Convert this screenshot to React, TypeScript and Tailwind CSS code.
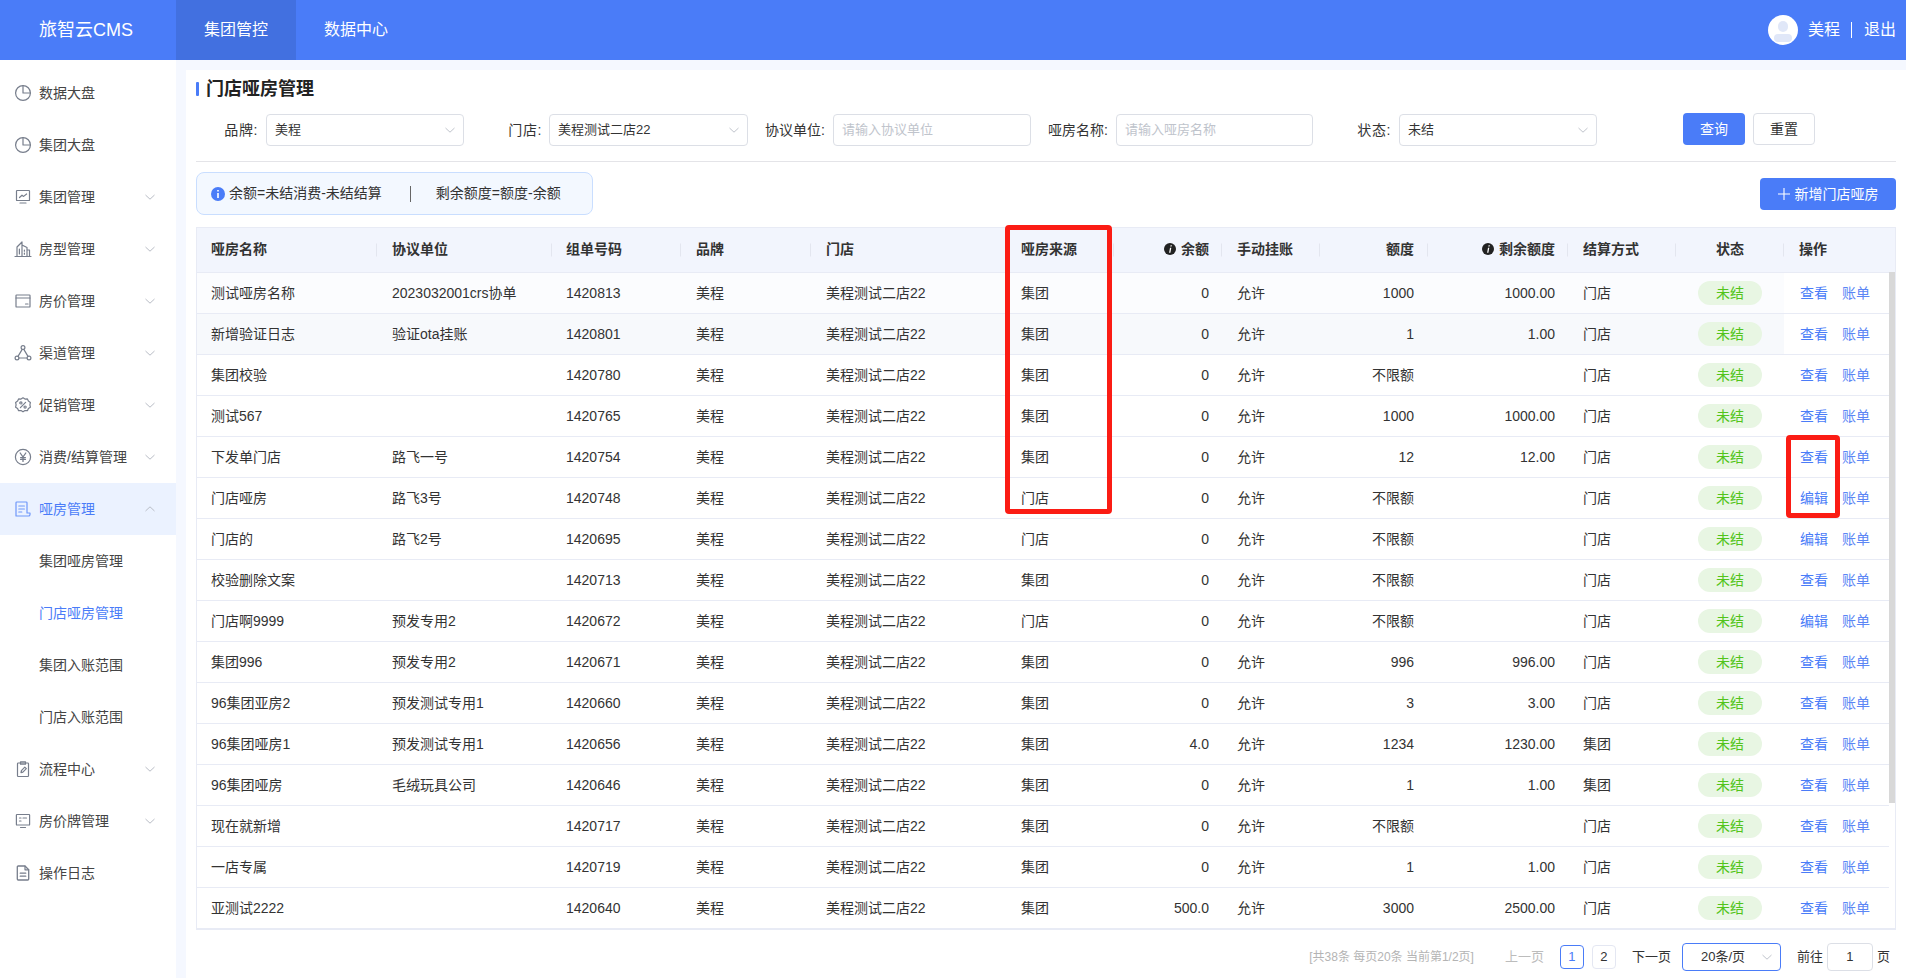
import React from "react";

const FONT = { fontFamily: '"Liberation Sans","Noto Sans CJK SC",sans-serif' };

type IP = { c?: string };
const S = ({ c = "#777e8c", children }: IP & { children: React.ReactNode }) => (
  <svg width="18" height="18" viewBox="0 0 18 18" fill="none" stroke={c} strokeWidth="1.2" strokeLinecap="round" strokeLinejoin="round" className="shrink-0">
    {children}
  </svg>
);
const Pie = (p: IP) => (
  <S {...p}>
    <circle cx="9" cy="9" r="7.4" />
    <path d="M9 1.6V9H16.4" />
  </S>
);
const MonitorChart = (p: IP) => (
  <S {...p}>
    <rect x="2.5" y="2.5" width="13" height="10" rx="0.6" />
    <path d="M5.5 9.5 8 7.2l1.6 1.2 3-2.4M6 15h6" />
  </S>
);
const Building = (p: IP) => (
  <S {...p}>
    <path d="M1 16.5h16M3 16V7l5-5v14M8 5l5 2.5V16M13 10h2.5v6M5.4 9v5M10.4 10v1.2M10.4 13v1.2" />
  </S>
);
const Card = (p: IP) => (
  <S {...p}>
    <rect x="2" y="3" width="14" height="12" rx="0.6" />
    <path d="M2 6h14M11.5 12h2.5" />
  </S>
);
const Nodes = (p: IP) => (
  <S {...p}>
    <circle cx="9" cy="3.6" r="1.9" />
    <circle cx="3" cy="14" r="1.9" />
    <circle cx="15" cy="14" r="1.9" />
    <path d="M8.2 5.4 4 12.4M9.8 5.4l4.2 7M5 14h8" />
  </S>
);
const Badge = (p: IP) => (
  <S {...p}>
    <path d="M9 1.8l2 1.3 2.4-.2 1 2.2 2 1.3-.5 2.4.5 2.4-2 1.3-1 2.2-2.4-.2-2 1.3-2-1.3-2.4.2-1-2.2-2-1.3.5-2.4L1.6 6.4l2-1.3 1-2.2 2.4.2z" />
    <circle cx="6.9" cy="6.9" r="1.1" />
    <circle cx="11.1" cy="11.1" r="1.1" />
    <path d="M11.6 6.4 6.4 11.6" />
  </S>
);
const Yen = (p: IP) => (
  <S {...p}>
    <circle cx="9" cy="9" r="7.6" strokeWidth="1.2" />
    <path d="M6.2 5 9 9l2.8-4M9 9v4.4M6.6 9.6h4.8M6.6 11.4h4.8" strokeWidth="1.3" />
  </S>
);
const Doc = (p: IP) => (
  <S {...p}>
    <path d="M13 13V2.8A.8.8 0 0 0 12.2 2H2.8a.8.8 0 0 0-.8.8V16h12.4a1.6 1.6 0 0 0 1.6-1.6V13z" />
    <path d="M4.8 6h5.6M4.8 9h5.6M4.8 12h3" />
  </S>
);
const Clip = (p: IP) => (
  <S {...p}>
    <rect x="3.5" y="3" width="11" height="13.5" rx="0.8" />
    <path d="M6.5 1.8h5v2.4h-5zM7 12.6l.4-2 3.4-3.4 1.5 1.5-3.4 3.4z" />
  </S>
);
const Board = (p: IP) => (
  <S {...p}>
    <rect x="2.4" y="2.5" width="13.2" height="10.5" rx="0.6" />
    <path d="M5.5 6h1.5M9 6h3.5M5.5 9h1.5M6.5 15.5h5" />
  </S>
);
const FileI = (p: IP) => (
  <S {...p}>
    <path d="M11 2H4.2a.9.9 0 0 0-.9.9v12.2c0 .5.4.9.9.9h9.6a.9.9 0 0 0 .9-.9V5.8z" strokeWidth="1.3" />
    <path d="M11 2v3.8h3.7M6.2 9.2h5.6M6.2 12.2h5.6" />
  </S>
);

const Chevron = ({ up = false, c = "#b9bdc6" }: { up?: boolean; c?: string }) => (
  <svg width="12" height="12" viewBox="0 0 12 12" fill="none" stroke={c} strokeWidth="1" className="shrink-0">
    <path d={up ? "M1.5 8 6 3.8 10.5 8" : "M1.5 4 6 8.2 10.5 4"} />
  </svg>
);

const menu: { t: string; I?: (p: IP) => React.ReactElement; arrow?: boolean; active?: boolean; sub?: boolean; cur?: boolean }[] = [
  { t: "数据大盘", I: Pie },
  { t: "集团大盘", I: Pie },
  { t: "集团管理", I: MonitorChart, arrow: true },
  { t: "房型管理", I: Building, arrow: true },
  { t: "房价管理", I: Card, arrow: true },
  { t: "渠道管理", I: Nodes, arrow: true },
  { t: "促销管理", I: Badge, arrow: true },
  { t: "消费/结算管理", I: Yen, arrow: true },
  { t: "哑房管理", I: Doc, arrow: true, active: true },
  { t: "集团哑房管理", sub: true },
  { t: "门店哑房管理", sub: true, cur: true },
  { t: "集团入账范围", sub: true },
  { t: "门店入账范围", sub: true },
  { t: "流程中心", I: Clip, arrow: true },
  { t: "房价牌管理", I: Board, arrow: true },
  { t: "操作日志", I: FileI },
];

type Row = [string, string, string, string, string, string, string, string, string];
const rows: Row[] = [
  ["测试哑房名称", "2023032001crs协单", "1420813", "集团", "0", "1000", "1000.00", "门店", "查看"],
  ["新增验证日志", "验证ota挂账", "1420801", "集团", "0", "1", "1.00", "门店", "查看"],
  ["集团校验", "", "1420780", "集团", "0", "不限额", "", "门店", "查看"],
  ["测试567", "", "1420765", "集团", "0", "1000", "1000.00", "门店", "查看"],
  ["下发单门店", "路飞一号", "1420754", "集团", "0", "12", "12.00", "门店", "查看"],
  ["门店哑房", "路飞3号", "1420748", "门店", "0", "不限额", "", "门店", "编辑"],
  ["门店的", "路飞2号", "1420695", "门店", "0", "不限额", "", "门店", "编辑"],
  ["校验删除文案", "", "1420713", "集团", "0", "不限额", "", "门店", "查看"],
  ["门店啊9999", "预发专用2", "1420672", "门店", "0", "不限额", "", "门店", "编辑"],
  ["集团996", "预发专用2", "1420671", "集团", "0", "996", "996.00", "门店", "查看"],
  ["96集团亚房2", "预发测试专用1", "1420660", "集团", "0", "3", "3.00", "门店", "查看"],
  ["96集团哑房1", "预发测试专用1", "1420656", "集团", "4.0", "1234", "1230.00", "集团", "查看"],
  ["96集团哑房", "毛绒玩具公司", "1420646", "集团", "0", "1", "1.00", "集团", "查看"],
  ["现在就新增", "", "1420717", "集团", "0", "不限额", "", "门店", "查看"],
  ["一店专属", "", "1420719", "集团", "0", "1", "1.00", "门店", "查看"],
  ["亚测试2222", "", "1420640", "集团", "500.0", "3000", "2500.00", "门店", "查看"],
];

const InfoDark = () => (
  <svg width="12" height="12" viewBox="0 0 12 12" className="mr-[5px] inline-block align-[-1px]">
    <circle cx="6" cy="6" r="6" fill="#222" />
    <path d="M6.6 2.2h1.3l-.3 1.4H6.3zM6 4.7h1.3L6.4 9.8H5.1z" fill="#fff" />
  </svg>
);

const Sep = () => <span className="absolute right-0 top-1/2 h-[13px] w-px -translate-y-1/2 bg-[#e3e6ef]" />;

const Th = ({ children, cls = "", sep = true }: { children: React.ReactNode; cls?: string; sep?: boolean }) => (
  <th className={`relative text-[14px] font-bold text-[#333] ${cls}`}>
    {children}
    {sep && <Sep />}
  </th>
);

const SelectBox = ({ v, w }: { v: string; w: string }) => (
  <div className={`flex h-[32px] items-center justify-between rounded-[4px] border border-[#dcdfe6] bg-white pl-[8px] pr-[7px] text-[13px] text-[#333] ${w}`}>
    <span>{v}</span>
    <Chevron c="#c0c4cc" />
  </div>
);
const InputBox = ({ v, w }: { v: string; w: string }) => (
  <div className={`flex h-[32px] items-center rounded-[4px] border border-[#dcdfe6] bg-white px-[8px] text-[13px] text-[#c0c4cc] ${w}`}>{v}</div>
);

export default function App() {
  return (
    <div style={FONT} className="flex h-screen w-full flex-col overflow-hidden bg-white text-[14px] text-[#333]">
      <header className="flex h-[60px] shrink-0 items-center bg-[#4a7cf8] text-white">
        <div className="w-[176px] pl-[39px] text-[18px] leading-[60px]">旅智云CMS</div>
        <div className="flex h-full w-[120px] items-center justify-center bg-[#4270e0] text-[16px]">集团管控</div>
        <div className="flex h-full w-[120px] items-center justify-center text-[16px]">数据中心</div>
        <div className="ml-auto flex items-center pr-[10px] text-[16px]">
          <div className="relative h-[30px] w-[30px] overflow-hidden rounded-full bg-white">
            <span className="absolute left-[10px] top-[6px] h-[11px] w-[10px] rounded-full bg-[#e0e7f8]" />
            <span className="absolute left-[6px] top-[19px] h-[8px] w-[18px] rounded-full bg-[#e0e7f8]" />
          </div>
          <span className="ml-[10px]">美程</span>
          <span className="ml-[11px] h-[16px] w-px bg-white" />
          <span className="ml-[12px]">退出</span>
        </div>
      </header>
      <div className="flex min-h-0 flex-1">
        <aside className="w-[176px] shrink-0 bg-white pt-[7px]">
          {menu.map((m) => (
            <div
              key={m.t}
              className={`flex h-[52px] items-center pr-[20px] ${m.sub ? "pl-[39px]" : "pl-[14px]"} ${m.active ? "bg-[#ebf2ff]" : ""} ${
                m.active || m.cur ? "text-[#4a7cf8]" : "text-[#444]"
              }`}
            >
              {m.I && (
                <span className="mr-[7px]">
                  <m.I c={m.active ? "#6f97fa" : undefined} />
                </span>
              )}
              <span>{m.t}</span>
              {m.arrow && (
                <span className="ml-auto">
                  <Chevron up={m.active} />
                </span>
              )}
            </div>
          ))}
        </aside>
        <main className="min-w-0 flex-1 bg-[#f5f8ff] pl-[10px] pt-[10px]">
          <div className="relative h-full bg-white px-[10px]">
            <div className="flex h-[38px] items-center">
              <span className="h-[14px] w-[3px] rounded-[1px] bg-[#4a7cf8]" />
              <h1 className="ml-[7px] text-[18px] font-bold text-[#222]">门店哑房管理</h1>
            </div>
            <div className="mt-[6px] flex items-start">
              <label className="mr-[8px] w-[62px] text-right leading-[32px] tracking-[0.6px]">品牌:</label>
              <SelectBox v="美程" w="w-[198px]" />
              <label className="mr-[7px] w-[78px] text-right leading-[32px] tracking-[0.6px]">门店:</label>
              <SelectBox v="美程测试二店22" w="w-[199px]" />
              <label className="mr-[8px] w-[77px] text-right leading-[32px]">协议单位:</label>
              <InputBox v="请输入协议单位" w="w-[198px]" />
              <label className="mr-[8px] w-[77px] text-right leading-[32px]">哑房名称:</label>
              <InputBox v="请输入哑房名称" w="w-[197px]" />
              <label className="mr-[8px] w-[78px] text-right leading-[32px] tracking-[0.6px]">状态:</label>
              <SelectBox v="未结" w="w-[198px]" />
              <button className="-mt-px ml-[86px] h-[32px] w-[62px] rounded-[4px] bg-[#4a7cf8] text-white">查询</button>
              <button className="-mt-px ml-[8px] h-[32px] w-[62px] rounded-[4px] border border-[#dcdfe6] bg-white text-[#333]">重置</button>
            </div>
            <div className="mt-[15px] h-px bg-[#e4e4e8]" />
            <div className="mt-[10px] flex items-start justify-between">
              <div className="flex h-[43px] w-[397px] items-center rounded-[8px] border border-[#c9deff] bg-[#f3f8ff] pl-[14px]">
                <svg width="14" height="14" viewBox="0 0 14 14" className="shrink-0">
                  <circle cx="7" cy="7" r="7" fill="#4a7cf8" />
                  <path d="M6.2 3h1.6v1.6H6.2zM6.2 6h1.6v5H6.2z" fill="#fff" />
                </svg>
                <span className="ml-[4px]">余额=未结消费-未结结算</span>
                <span className="ml-[28px] h-[16px] w-px bg-[#666]" />
                <span className="ml-[25px]">剩余额度=额度-余额</span>
              </div>
              <button className="mt-[6px] flex h-[32px] w-[136px] items-center justify-center rounded-[4px] bg-[#4a7cf8] text-white">
                <svg width="12" height="12" viewBox="0 0 12 12" stroke="#fff" strokeWidth="1.1" className="mr-[5px]">
                  <path d="M6 0v12M0 6h12" />
                </svg>
                新增门店哑房
              </button>
            </div>

            <div className="relative mt-[12px] h-[703px] w-[1700px] overflow-hidden border border-b-2 border-[#e8ebf5]">
              <table className="w-[1698px] table-fixed border-collapse">
                <colgroup>
                  <col className="w-[180px]" />
                  <col className="w-[175px]" />
                  <col className="w-[129px]" />
                  <col className="w-[130px]" />
                  <col className="w-[195px]" />
                  <col className="w-[108px]" />
                  <col className="w-[108px]" />
                  <col className="w-[98px]" />
                  <col className="w-[108px]" />
                  <col className="w-[140px]" />
                  <col className="w-[108px]" />
                  <col className="w-[108px]" />
                  <col className="w-[111px]" />
                </colgroup>
                <thead>
                  <tr className="h-[44px] border-b border-[#e8ebf5] bg-[#f2f5fd]">
                    <Th cls="pl-[14px] text-left">哑房名称</Th>
                    <Th cls="pl-[15px] text-left">协议单位</Th>
                    <Th cls="pl-[14px] text-left">组单号码</Th>
                    <Th cls="pl-[15px] text-left">品牌</Th>
                    <Th cls="pl-[15px] text-left">门店</Th>
                    <Th cls="pl-[15px] text-left">哑房来源</Th>
                    <Th cls="pr-[13px] text-right">
                      <InfoDark />
                      余额
                    </Th>
                    <Th cls="pl-[15px] text-left">手动挂账</Th>
                    <Th cls="pr-[14px] text-right">额度</Th>
                    <Th cls="pr-[13px] text-right">
                      <InfoDark />
                      剩余额度
                    </Th>
                    <Th cls="pl-[15px] text-left">结算方式</Th>
                    <Th cls="text-center">状态</Th>
                    <Th cls="pl-[15px] text-left" sep={false}>操作</Th>
                  </tr>
                </thead>
                <tbody>
                  {rows.map((r, i) => (
                    <tr key={r[0]} className={`h-[41px] border-b border-[#e8ebf5] [&>td]:pt-px ${i === 0 ? "bg-[#fbfcfe]" : i === 1 ? "bg-[#f7f9fc]" : "bg-white"}`}>
                      <td className="pl-[14px]">{r[0]}</td>
                      <td className="pl-[15px]">{r[1]}</td>
                      <td className="pl-[14px]">{r[2]}</td>
                      <td className="pl-[15px]">美程</td>
                      <td className="pl-[15px]">美程测试二店22</td>
                      <td className="pl-[15px]">{r[3]}</td>
                      <td className="pr-[13px] text-right">{r[4]}</td>
                      <td className="pl-[15px]">允许</td>
                      <td className="pr-[14px] text-right">{r[5]}</td>
                      <td className="pr-[13px] text-right">{r[6]}</td>
                      <td className="pl-[15px]">{r[7]}</td>
                      <td className="!pt-0">
                        <span className="mx-auto block h-[24px] w-[64px] rounded-[12px] bg-[#e8f6e3] text-center leading-[24px] text-[#52c41a]">未结</span>
                      </td>
                      <td className="bg-white pl-[16px]">
                        <span className="text-[#4a7cf8]">{r[8]}</span>
                        <span className="ml-[14px] text-[#5b86f5]">账单</span>
                      </td>
                    </tr>
                  ))}
                </tbody>
              </table>
              <div className="absolute bottom-0 right-0 top-[44px] w-[6px] bg-white">
                <div className="h-[531px] w-full bg-[#d8d8d8]" />
              </div>
            </div>

            <div className="mt-[13px] flex h-[28px] items-center justify-end pr-[6px] text-[13px]">
              <span className="text-[12px] text-[#b4b4b4]">[共38条 每页20条 当前第1/2页]</span>
              <span className="ml-[31px] text-[#bcbcbc]">上一页</span>
              <span className="ml-[16px] flex h-[24px] w-[24px] items-center justify-center rounded-[4px] border border-[#4a7cf8] text-[#4a7cf8]">1</span>
              <span className="ml-[8px] flex h-[24px] w-[24px] items-center justify-center rounded-[4px] border border-[#e4e7f2]">2</span>
              <span className="ml-[16px]">下一页</span>
              <div className="ml-[11px] flex h-[28px] w-[99px] items-center rounded-[4px] border border-[#4a7cf8] pl-[18px] pr-[7px]">
                <span>20条/页</span>
                <span className="ml-auto">
                  <Chevron c="#c0c4cc" />
                </span>
              </div>
              <span className="ml-[16px]">前往</span>
              <div className="ml-[4px] flex h-[28px] w-[46px] items-center justify-center rounded-[4px] border border-[#dcdfe6]">1</div>
              <span className="ml-[4px]">页</span>
            </div>

            <div className="pointer-events-none absolute left-[819px] top-[155px] h-[289px] w-[107px] rounded-[4px] border-[5px] border-[#fb1c14]" />
            <div className="pointer-events-none absolute left-[1600px] top-[365px] h-[83px] w-[54px] rounded-[4px] border-[5px] border-[#fb1c14]" />
          </div>
        </main>
      </div>
    </div>
  );
}
